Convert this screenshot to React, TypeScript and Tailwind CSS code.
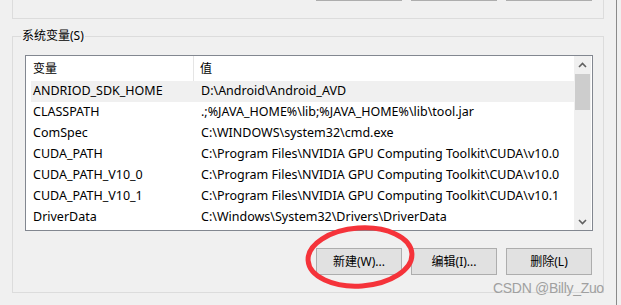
import React from 'react';

const rows = [
  ['ANDRIOD_SDK_HOME', 'D:\\Android\\Android_AVD'],
  ['CLASSPATH', '.;%JAVA_HOME%\\lib;%JAVA_HOME%\\lib\\tool.jar'],
  ['ComSpec', 'C:\\WINDOWS\\system32\\cmd.exe'],
  ['CUDA_PATH', 'C:\\Program Files\\NVIDIA GPU Computing Toolkit\\CUDA\\v10.0'],
  ['CUDA_PATH_V10_0', 'C:\\Program Files\\NVIDIA GPU Computing Toolkit\\CUDA\\v10.0'],
  ['CUDA_PATH_V10_1', 'C:\\Program Files\\NVIDIA GPU Computing Toolkit\\CUDA\\v10.1'],
  ['DriverData', 'C:\\Windows\\System32\\Drivers\\DriverData'],
];

function Btn({ label }: { label: string }) {
  return (
    <div className="w-[86px] h-[27px] bg-[#e1e1e1] border border-[#adadad] flex items-center justify-center text-[12px] text-black">
      {label}
    </div>
  );
}

export default function App() {
  return (
    <div
      className="w-[621px] h-[305px] bg-[#f0f0f0] flex overflow-hidden relative text-black"
      style={{ fontFamily: '"Noto Sans", "Noto Sans CJK SC", sans-serif' }}
    >
      <div className="w-[616px] flex flex-col shrink-0">
        {/* user variables box, cut off at the top */}
        <div className="ml-[12px] w-[592px] h-[19px] border-x border-b border-[#dcdcdc] flex justify-end gap-[9px] pr-[11px]">
          <div className="w-[86px] h-px bg-[#adadad]" />
          <div className="w-[86px] h-px bg-[#adadad]" />
          <div className="w-[86px] h-px bg-[#adadad]" />
        </div>

        {/* system variables */}
        <div className="relative ml-[12px] mt-[17px] w-[592px] h-[257px] border border-[#dcdcdc] flex flex-col">
          <span className="absolute left-[8px] -top-[10px] bg-[#f0f0f0] text-[12px] leading-[18px] px-px">系统变量(S)</span>

          <div className="ml-[12px] mt-[18px] w-[568px] h-[176px] border border-[#828790] bg-white flex">
            <div className="w-[548px] flex flex-col overflow-hidden">
              <div className="h-[25px] shrink-0 flex text-[12px] items-center">
                <div className="w-[168px] pl-[7px] h-full flex items-center border-r border-[#e5e5e5]">变量</div>
                <div className="pl-[6px]">值</div>
              </div>
              {rows.map(([k, v], i) => (
                <div
                  key={k}
                  className={`h-[21px] shrink-0 ml-[5px] flex items-center text-[12.5px] whitespace-nowrap ${i === 0 ? 'bg-[#f0f0f0]' : ''}`}
                >
                  <div className="w-[163px] pl-[2px]">{k}</div>
                  <div className="pl-[7px]">{v}</div>
                </div>
              ))}
            </div>
            <div className="w-[17px] bg-[#f0f0f0] flex flex-col items-center">
              <div className="h-[17px] w-full flex items-center justify-center">
                <svg width="9" height="6" viewBox="0 0 9 6">
                  <path d="M1 5 L4.5 1.5 L8 5" fill="none" stroke="#606060" strokeWidth="1.6" />
                </svg>
              </div>
              <div className="mt-px w-[15px] h-[36px] bg-[#cdcdcd]" />
              <div className="flex-1" />
              <div className="h-[17px] w-full flex items-center justify-center">
                <svg width="9" height="6" viewBox="0 0 9 6">
                  <path d="M1 1 L4.5 4.5 L8 1" fill="none" stroke="#606060" strokeWidth="1.6" />
                </svg>
              </div>
            </div>
          </div>

          <div className="mt-[17px] ml-[303px] flex gap-[9px]">
            <Btn label="新建(W)..." />
            <Btn label="编辑(I)..." />
            <Btn label="删除(L)" />
          </div>
        </div>
      </div>
      <div className="w-px h-full bg-[#8a8a8a]" />

      {/* red annotation */}
      <svg className="absolute left-[302px] top-[223px]" width="116" height="68" viewBox="0 0 116 68">
        <ellipse cx="58" cy="34" rx="52" ry="29" fill="none" stroke="#f5333a" strokeWidth="5" transform="rotate(-4 58 34)" />
      </svg>

      <span
        className="absolute left-[493px] top-[281px] text-[14px] tracking-[-0.3px] text-[#a0a0a0] leading-none"
        style={{ fontFamily: '"Liberation Sans", sans-serif' }}
      >
        CSDN @Billy_Zuo
      </span>
    </div>
  );
}
